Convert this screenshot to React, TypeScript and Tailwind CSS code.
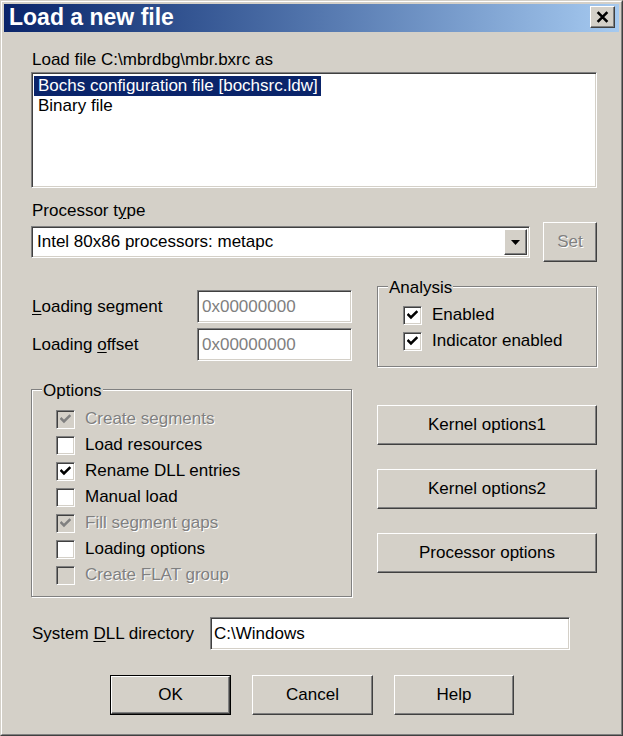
import React from 'react';

// win2000 style edges
const raised =
  'border border-t-white border-l-white border-r-[#404040] border-b-[#404040] shadow-[inset_-1px_-1px_0_#808080]';
const sunken =
  'border border-t-[#808080] border-l-[#808080] border-r-white border-b-white shadow-[inset_1px_1px_0_#404040,inset_-1px_-1px_0_#d4d0c8]';
const etched = 'border border-[#808080] shadow-[inset_1px_1px_0_#fff,1px_1px_0_#fff]';
const grayText = 'text-[#808080] [text-shadow:1px_1px_0_#fff]';

function CheckMark({ color }: { color: string }) {
  return (
    <svg viewBox="0 0 10 10" className="h-[11px] w-[11px]">
      <path d="M1.3 4.4 L3.6 6.8 L8.6 1.8" fill="none" stroke={color} strokeWidth="2.3" strokeLinecap="square" />
    </svg>
  );
}

function Check({ label, checked = false, disabled = false }: { label: string; checked?: boolean; disabled?: boolean }) {
  return (
    <div className="flex h-[26px] items-center gap-[10px]">
      <span className={`flex h-[19px] w-[19px] items-center justify-center ${sunken} ${disabled ? 'bg-[#d4d0c8]' : 'bg-white'}`}>
        {checked && <CheckMark color={disabled ? '#808080' : '#000'} />}
      </span>
      <span className={disabled ? grayText : 'text-black'}>{label}</span>
    </div>
  );
}

function Button({ children, className = '' }: { children: React.ReactNode; className?: string }) {
  return (
    <div className={`flex h-[40px] items-center justify-center bg-[#d4d0c8] ${raised} ${className}`}>{children}</div>
  );
}

function GroupBox({ title, className, children }: { title: string; className: string; children: React.ReactNode }) {
  return (
    <div className="relative pt-[8px]">
      <div className={`${etched} ${className}`}>{children}</div>
      <span className="absolute left-[11px] top-0 bg-[#d4d0c8] px-[1px]">{title}</span>
    </div>
  );
}

export default function App() {
  return (
    <div className="h-[736px] w-[623px] font-['Liberation_Sans',Arial,sans-serif] text-[17px] leading-[20px] text-black">
      <div className="h-full border border-t-[#d4d0c8] border-l-[#d4d0c8] border-r-[#404040] border-b-[#404040]">
        <div className="h-full border border-t-white border-l-white border-r-[#808080] border-b-[#808080] bg-[#d4d0c8] p-[2px]">
          {/* title bar */}
          <div className="flex h-[28px] items-start justify-between bg-linear-to-r from-[#0a246a] to-[#a6caf0]">
            <span className="pl-[5px] pt-[1px] text-[23px] font-bold leading-[24px] text-white">Load a new file</span>
            <div className={`mr-[4px] mt-[2px] flex h-[22px] w-[25px] items-center justify-center bg-[#d4d0c8] ${raised}`}>
              <svg viewBox="0 0 12 11" className="h-[12px] w-[13px]">
                <path d="M1.5 1 L10.5 10 M10.5 1 L1.5 10" stroke="#000" strokeWidth="2.4" />
              </svg>
            </div>
          </div>

          {/* body */}
          <div className="pl-[27px] pr-[22px]">
            <div className="mt-[18px] pl-[1px]">{'Load file C:\\mbrdbg\\mbr.bxrc as'}</div>
            <div className={`mt-[2px] h-[116px] bg-white p-[2px] pt-[3px] ${sunken}`}>
              <div className="w-fit bg-[#0a246a] pl-[4px] pr-[3px] text-white">Bochs configuration file [bochsrc.ldw]</div>
              <div className="pl-[4px]">Binary file</div>
            </div>

            <div className="mt-[13px] pl-[1px]">
              Processor t<u className="underline-offset-2">y</u>pe
            </div>
            <div className="mt-[1px] flex h-[40px] items-center justify-between">
              <div className={`flex h-[32px] w-[499px] items-stretch bg-white p-[2px] ${sunken}`}>
                <div className="flex flex-1 items-center pl-[3px]">Intel 80x86 processors: metapc</div>
                <div className={`flex w-[23px] items-center justify-center bg-[#d4d0c8] ${raised}`}>
                  <svg viewBox="0 0 9 5" className="h-[5px] w-[9px]">
                    <path d="M0 0 H9 L4.5 5 Z" fill="#000" />
                  </svg>
                </div>
              </div>
              <Button className={`w-[54px] ${grayText}`}>Set</Button>
            </div>

            <div className="mt-[16px] flex items-start justify-between">
              <div className="mt-[12px] flex flex-col gap-[5px]">
                <div className="flex items-center">
                  <span className="w-[166px] pl-[1px]">
                    <u className="underline-offset-2">L</u>oading segment
                  </span>
                  <div className={`flex h-[33px] w-[155px] items-center bg-white pl-[4px] text-[#808080] ${sunken}`}>0x00000000</div>
                </div>
                <div className="flex items-center">
                  <span className="w-[166px] pl-[1px]">
                    Loading <u className="underline-offset-2">o</u>ffset
                  </span>
                  <div className={`flex h-[33px] w-[155px] items-center bg-white pl-[4px] text-[#808080] ${sunken}`}>0x00000000</div>
                </div>
              </div>
              <GroupBox title="Analysis" className="h-[81px] w-[220px] pl-[25px] pt-[15px]">
                <Check label="Enabled" checked />
                <Check label="Indicator enabled" checked />
              </GroupBox>
            </div>

            <div className="mt-[14px] flex items-start justify-between">
              <GroupBox title="Options" className="h-[208px] w-[321px] pl-[24px] pt-[16px]">
                <Check label="Create segments" checked disabled />
                <Check label="Load resources" />
                <Check label="Rename DLL entries" checked />
                <Check label="Manual load" />
                <Check label="Fill segment gaps" checked disabled />
                <Check label="Loading options" />
                <Check label="Create FLAT group" disabled />
              </GroupBox>
              <div className="mt-[24px] flex w-[220px] flex-col gap-[24px]">
                <Button>Kernel options1</Button>
                <Button>Kernel options2</Button>
                <Button>Processor options</Button>
              </div>
            </div>

            <div className="mt-[20px] flex items-center">
              <span className="w-[179px] pl-[1px]">
                System <u className="underline-offset-2">D</u>LL directory
              </span>
              <div className={`flex h-[33px] w-[360px] items-center bg-white pl-[3px] ${sunken}`}>{'C:\\Windows'}</div>
            </div>

            <div className="ml-[79px] mt-[25px] flex gap-[21px]">
              <div className="h-[40px] w-[121px] border border-black">
                <div className={`flex h-full items-center justify-center ${raised}`}>OK</div>
              </div>
              <Button className="w-[121px]">Cancel</Button>
              <Button className="w-[120px]">Help</Button>
            </div>
          </div>
        </div>
      </div>
    </div>
  );
}
